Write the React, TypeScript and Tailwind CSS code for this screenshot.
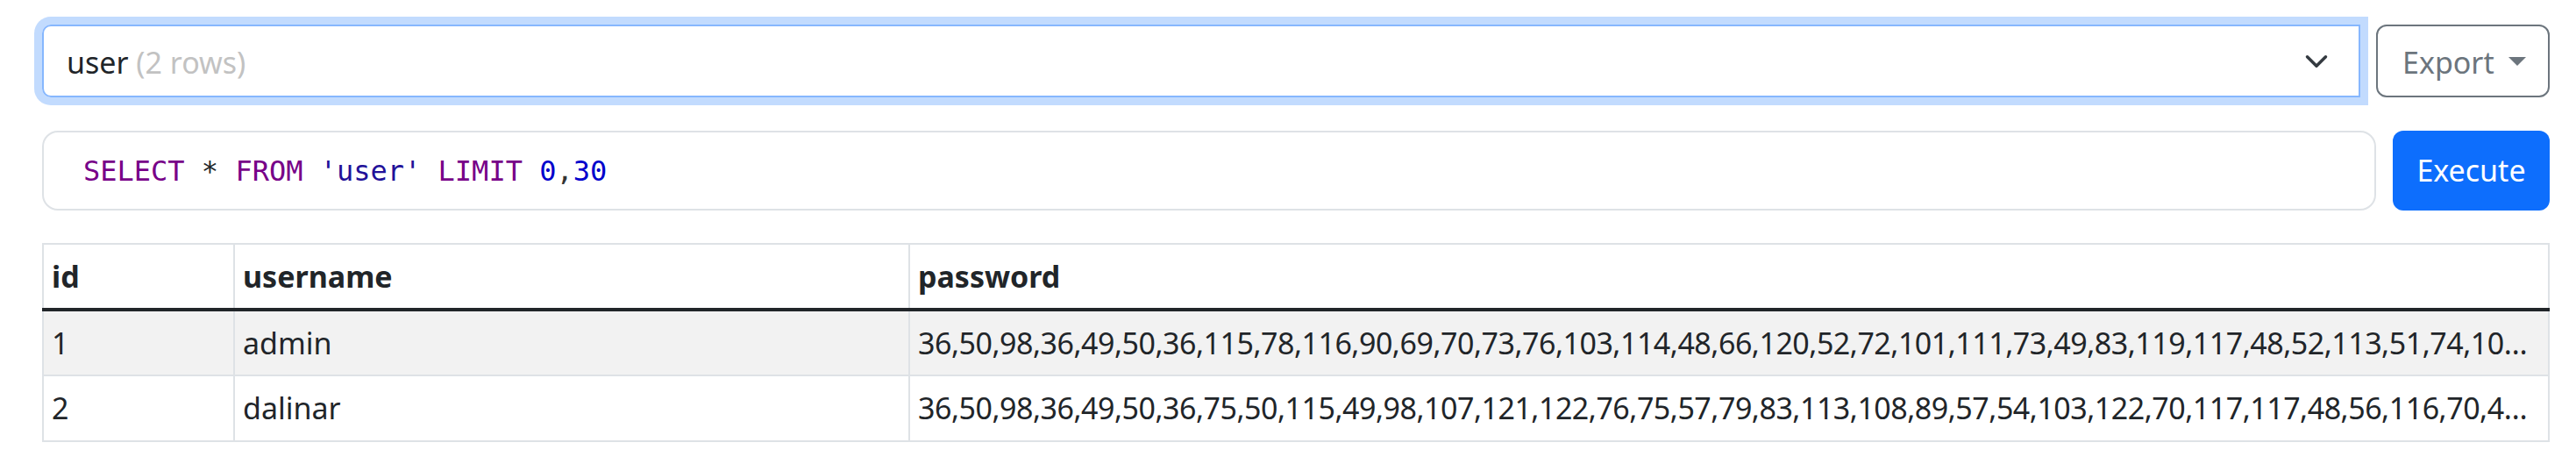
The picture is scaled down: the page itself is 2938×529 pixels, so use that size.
const rows = [
  {
    id: 1,
    username: "admin",
    password:
      "36,50,98,36,49,50,36,115,78,116,90,69,70,73,76,103,114,48,66,120,52,72,101,111,73,49,83,119,117,48,52,113,51,74,104,109,77,46,55,104,74,71,86,103,50",
  },
  {
    id: 2,
    username: "dalinar",
    password:
      "36,50,98,36,49,50,36,75,50,115,49,98,107,121,122,76,75,57,79,83,113,108,89,57,54,103,122,70,117,117,48,56,116,70,47,105,88,51,122,110,84,56,97,99",
  },
];

function Chevron() {
  return (
    <svg width="28" height="28" viewBox="0 0 16 16" fill="none">
      <path
        d="m2 5 6 6 6-6"
        stroke="#343a40"
        strokeWidth="2"
        strokeLinecap="round"
        strokeLinejoin="round"
      />
    </svg>
  );
}

export default function App() {
  return (
    <div
      className="w-[2938px] h-[529px] bg-white pl-[48px] pr-[30px] pt-[28px] text-[#212529]"
      style={{ fontFamily: '"Noto Sans", "Open Sans", sans-serif' }}
    >
      {/* table picker + export */}
      <div className="flex gap-[18px] h-[83px]">
        <div className="flex-1 flex items-center justify-between border-2 border-[#86b7fe] rounded-l-[10px] shadow-[0_0_0_9px_rgba(13,110,253,0.25)] pl-[26px] pr-[34px] text-[34px]">
          <span className="pt-[3px]">
            user <span className="text-[#c2c2c2]">(2 rows)</span>
          </span>
          <Chevron />
        </div>
        <button className="w-[198px] flex items-center pl-[28px] gap-[16px] border-2 border-[#6c757d] rounded-[12px] text-[#6c757d] text-[34px]">
          <span className="pt-[3px]">Export</span>
          <span className="w-0 h-0 border-l-[10px] border-r-[10px] border-t-[10px] border-l-transparent border-r-transparent border-t-[#6c757d]" />
        </button>
      </div>

      {/* query editor */}
      <div className="mt-[38px] flex gap-[19px] h-[91px]">
        <div
          className="flex-1 flex items-center border-2 border-[#dee2e6] rounded-[18px] pl-[45px] text-[32px] whitespace-pre"
          style={{ fontFamily: '"DejaVu Sans Mono", monospace' }}
        >
          <span className="text-[#770088]">SELECT</span>
          <span> * </span>
          <span className="text-[#770088]">FROM</span>
          <span> </span>
          <span className="text-[#221199]">'user'</span>
          <span> </span>
          <span className="text-[#770088]">LIMIT</span>
          <span> </span>
          <span className="text-[#0000cc]">0</span>
          <span className="text-[#333]">,</span>
          <span className="text-[#0000cc]">30</span>
        </div>
        <button className="w-[179px] bg-[#0d6efd] rounded-[12px] text-white text-[34px]">
          Execute
        </button>
      </div>

      {/* results */}
      <table className="mt-[37px] w-full table-fixed border-collapse border-2 border-[#dee2e6] text-[34px]">
        <colgroup>
          <col className="w-[218px]" />
          <col className="w-[770px]" />
          <col />
        </colgroup>
        <thead>
          <tr className="h-[75px] border-b-4 border-b-[#212529]">
            <th className="text-left font-bold px-[9px] border-r-2 border-[#dee2e6]">id</th>
            <th className="text-left font-bold px-[9px] border-r-2 border-[#dee2e6]">username</th>
            <th className="text-left font-bold px-[9px]">password</th>
          </tr>
        </thead>
        <tbody>
          {rows.map((row, i) => (
            <tr
              key={row.id}
              className={`h-[75px] border-b-2 border-[#dee2e6] ${i % 2 === 0 ? "bg-[#f2f2f2]" : "bg-white"}`}
            >
              <td className="px-[9px] border-r-2 border-[#dee2e6]">{row.id}</td>
              <td className="px-[9px] border-r-2 border-[#dee2e6]">{row.username}</td>
              <td className="px-[9px] overflow-hidden text-ellipsis whitespace-nowrap tracking-[-0.5px]">
                {row.password}
              </td>
            </tr>
          ))}
        </tbody>
      </table>
    </div>
  );
}
